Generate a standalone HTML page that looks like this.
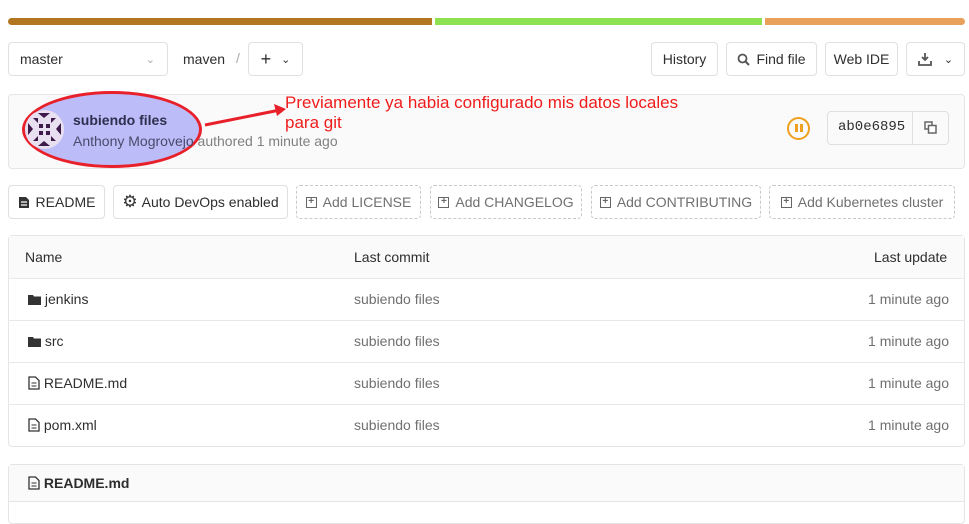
<!DOCTYPE html><html><head><style>
*{box-sizing:border-box;margin:0;padding:0}
body{width:969px;height:506px;overflow:hidden;background:#fff;font-family:"Liberation Sans",sans-serif;font-size:14px;color:#2e2e2e;position:relative}
.a{position:absolute}
.btn{position:absolute;border:1px solid #e0e0e0;border-radius:4px;background:#fff;display:flex;align-items:center;justify-content:center;height:34px;font-size:14px;color:#2e2e2e}
.dash{border:1px dashed #c8c8c8;color:#707070}
.row{position:absolute;left:8px;width:957px;height:42px;border-top:1px solid #e8e8e8}
.row span{position:absolute;top:12px}
</style></head><body>
<div class="a" style="left:8px;top:18px;width:424px;height:7px;background:#b27620;border-radius:4px 0 0 4px"></div>
<div class="a" style="left:435px;top:18px;width:327px;height:7px;background:#8ee150"></div>
<div class="a" style="left:765px;top:18px;width:200px;height:7px;background:#e8a05a;border-radius:0 4px 4px 0"></div>

<div class="btn" style="left:8px;top:42px;width:160px;justify-content:space-between;padding:0 12px 0 11px"><span>master</span><span style="color:#aaa;font-size:11px">&#8964;</span></div>
<div class="a" style="left:183px;top:51px">maven</div>
<div class="a" style="left:236px;top:50px;color:#aaa">/</div>
<div class="btn" style="left:248px;top:42px;width:55px;gap:10px"><b style="font-size:18px;font-weight:normal">+</b><span style="font-size:11px">&#8964;</span></div>
<div class="btn" style="left:651px;top:42px;width:67px">History</div>
<div class="btn" style="left:726px;top:42px;width:91px;gap:6px"><svg width="13" height="13" viewBox="0 0 13 13"><circle cx="5.5" cy="5.5" r="4" fill="none" stroke="#555" stroke-width="1.8"/><path d="M8.5 8.5L12 12" stroke="#555" stroke-width="2"/></svg>Find file</div>
<div class="btn" style="left:825px;top:42px;width:73px">Web IDE</div>
<div class="btn" style="left:906px;top:42px;width:59px;gap:12px"><svg width="14" height="14" viewBox="0 0 14 14"><path d="M7 1v7M4 5l3 3 3-3M1 9v4h12V9" fill="none" stroke="#555" stroke-width="1.8"/></svg><span style="font-size:11px">&#8964;</span></div>

<div class="a" style="left:8px;top:94px;width:957px;height:75px;background:#fafafa;border:1px solid #e5e5e5;border-radius:4px"></div>
<div class="a" style="left:22px;top:91px;width:180px;height:77px;border-radius:50%;background:#bcbcf8;border:3px solid #e8202a"></div>
<div class="a" style="left:25px;top:110px;width:39px;height:39px;border-radius:50%;background:#e8e0f0;overflow:hidden">
<svg width="39" height="39" viewBox="0 0 39 39"><g fill="#3d1a4a"><rect x="14" y="14" width="4" height="4"/><rect x="21" y="14" width="4" height="4"/><rect x="14" y="21" width="4" height="4"/><rect x="21" y="21" width="4" height="4"/><path d="M3 13l5 6-5 6zM36 13l-5 6 5 6zM13 3l6 5 6-5zM13 36l6-5 6 5z"/><path d="M8 8h5v5zM31 8h-5v5zM8 31h5v-5zM31 31h-5v-5z"/></g></svg></div>
<div class="a" style="left:73px;top:112px;font-weight:bold;color:#2e2e4e">subiendo files</div>
<div class="a" style="left:73px;top:133px;color:#4a4a6a">Anthony Mogrovejo<span style="color:#808080"> authored 1 minute ago</span></div>
<svg class="a" style="left:200px;top:100px" width="90" height="30"><path d="M5 25L80 10" stroke="#e8202a" stroke-width="3"/><path d="M86 9L74 4 77 16z" fill="#e8202a"/></svg>
<div class="a" style="left:285px;top:93px;color:#f01c1c;font-size:17px;line-height:20px">Previamente ya habia configurado mis datos locales<br>para git</div>
<div class="a" style="left:787px;top:117px;width:23px;height:23px;border:2px solid #f0a020;border-radius:50%"></div>
<div class="a" style="left:795px;top:124px;width:2.5px;height:8px;background:#f0a020"></div>
<div class="a" style="left:800px;top:124px;width:2.5px;height:8px;background:#f0a020"></div>
<div class="a" style="left:827px;top:111px;width:122px;height:34px;border:1px solid #e0e0e0;border-radius:4px;background:#fafafa"></div>
<div class="a" style="left:912px;top:111px;width:1px;height:34px;background:#e0e0e0"></div>
<div class="a" style="left:838px;top:119px;font-family:'Liberation Mono',monospace;font-size:14px">ab0e6895</div>
<svg class="a" style="left:924px;top:121px" width="13" height="13"><rect x="1" y="1" width="7" height="7" fill="none" stroke="#666" stroke-width="1.5"/><rect x="4.5" y="4.5" width="7.5" height="7.5" fill="#fff" stroke="#666" stroke-width="1.5"/></svg>

<div class="btn" style="left:8px;top:185px;width:97px;gap:6px"><svg width="12" height="13"><path d="M1 1h7l3 3v8H1z" fill="#333"/><path d="M3 6h6M3 9h6" stroke="#fff" stroke-width="1.3"/></svg>README</div>
<div class="btn" style="left:113px;top:185px;width:175px;gap:4px"><span style="font-size:17px;color:#333">&#9881;</span>Auto DevOps enabled</div>
<div class="btn dash" style="left:296px;top:185px;width:125px;gap:6px"><span style="display:inline-block;width:11px;height:11px;border:1.5px solid #666;font-size:10px;line-height:8px;text-align:center;color:#666;font-weight:bold">+</span>Add LICENSE</div>
<div class="btn dash" style="left:430px;top:185px;width:152px;gap:6px"><span style="display:inline-block;width:11px;height:11px;border:1.5px solid #666;font-size:10px;line-height:8px;text-align:center;color:#666;font-weight:bold">+</span>Add CHANGELOG</div>
<div class="btn dash" style="left:591px;top:185px;width:170px;gap:6px"><span style="display:inline-block;width:11px;height:11px;border:1.5px solid #666;font-size:10px;line-height:8px;text-align:center;color:#666;font-weight:bold">+</span>Add CONTRIBUTING</div>
<div class="btn dash" style="left:769px;top:185px;width:186px;gap:6px"><span style="display:inline-block;width:11px;height:11px;border:1.5px solid #666;font-size:10px;line-height:8px;text-align:center;color:#666;font-weight:bold">+</span>Add Kubernetes cluster</div>

<div class="a" style="left:8px;top:235px;width:957px;height:212px;border:1px solid #e5e5e5;border-radius:4px"></div>
<div class="a" style="left:9px;top:236px;width:955px;height:42px;background:#fafafa"></div>
<div class="a" style="left:25px;top:249px">Name</div>
<div class="a" style="left:354px;top:249px">Last commit</div>
<div class="a" style="left:874px;top:249px">Last update</div>
<div class="row" style="top:278px"><span style="left:20px"><svg width="13" height="11" style="vertical-align:-1px"><path d="M0 1h5l1 1.5h7V11H0z" fill="#333"/></svg> jenkins</span><span style="left:346px;color:#707070">subiendo files</span><span style="right:16px;color:#707070">1 minute ago</span></div>
<div class="row" style="top:320px"><span style="left:20px"><svg width="13" height="11" style="vertical-align:-1px"><path d="M0 1h5l1 1.5h7V11H0z" fill="#333"/></svg> src</span><span style="left:346px;color:#707070">subiendo files</span><span style="right:16px;color:#707070">1 minute ago</span></div>
<div class="row" style="top:362px"><span style="left:20px"><svg width="12" height="14" style="vertical-align:-2px"><path d="M1 1h6.5L11 4.5V13H1z" fill="none" stroke="#333" stroke-width="1.3"/><path d="M3.5 7h5M3.5 10h5" stroke="#333"/></svg> README.md</span><span style="left:346px;color:#707070">subiendo files</span><span style="right:16px;color:#707070">1 minute ago</span></div>
<div class="row" style="top:404px"><span style="left:20px"><svg width="12" height="14" style="vertical-align:-2px"><path d="M1 1h6.5L11 4.5V13H1z" fill="none" stroke="#333" stroke-width="1.3"/><path d="M3.5 7h5M3.5 10h5" stroke="#333"/></svg> pom.xml</span><span style="left:346px;color:#707070">subiendo files</span><span style="right:16px;color:#707070">1 minute ago</span></div>

<div class="a" style="left:8px;top:464px;width:957px;height:60px;border:1px solid #e5e5e5;border-radius:4px;background:#fff"></div>
<div class="a" style="left:9px;top:465px;width:955px;height:37px;background:#fafafa;border-bottom:1px solid #e5e5e5"></div>
<div class="a" style="left:28px;top:475px;font-weight:bold"><svg width="12" height="14" style="vertical-align:-2px"><path d="M1 1h6.5L11 4.5V13H1z" fill="none" stroke="#333" stroke-width="1.3"/><path d="M3.5 7h5M3.5 10h5" stroke="#333"/></svg> README.md</div>
</body></html>
